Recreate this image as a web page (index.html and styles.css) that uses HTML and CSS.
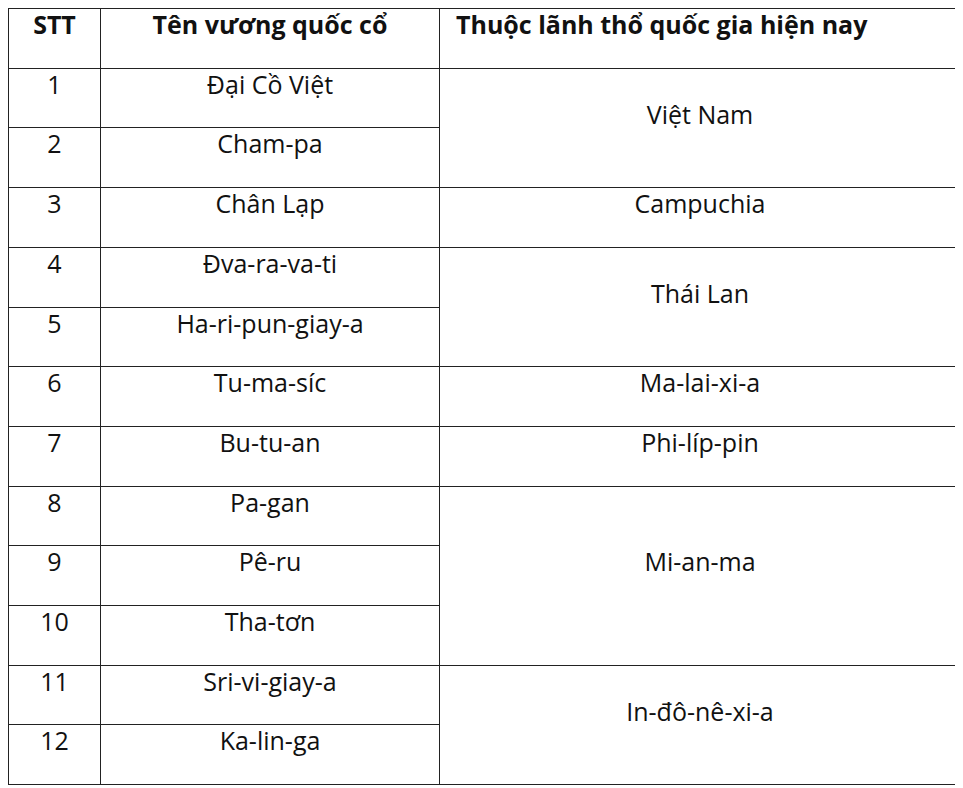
FILE: index.html
```html
<!DOCTYPE html>
<html lang="vi">
<head>
<meta charset="utf-8">
<title>Vương quốc cổ</title>
<link rel="stylesheet" href="styles.css">
</head>
<body>
<table class="grid">
  <colgroup>
    <col class="c1">
    <col class="c2">
    <col class="c3">
  </colgroup>
  <thead>
    <tr>
      <th class="center">STT</th>
      <th class="center">Tên vương quốc cổ</th>
      <th class="left">Thuộc lãnh thổ quốc gia hiện nay</th>
    </tr>
  </thead>
  <tbody>
    <tr><td>1</td><td>Đại Cồ Việt</td><td rowspan="2">Việt Nam</td></tr>
    <tr><td>2</td><td>Cham-pa</td></tr>
    <tr><td>3</td><td>Chân Lạp</td><td>Campuchia</td></tr>
    <tr><td>4</td><td>Đva-ra-va-ti</td><td rowspan="2">Thái Lan</td></tr>
    <tr><td>5</td><td>Ha-ri-pun-giay-a</td></tr>
    <tr><td>6</td><td>Tu-ma-síc</td><td>Ma-lai-xi-a</td></tr>
    <tr><td>7</td><td>Bu-tu-an</td><td>Phi-líp-pin</td></tr>
    <tr><td>8</td><td>Pa-gan</td><td rowspan="3">Mi-an-ma</td></tr>
    <tr><td>9</td><td>Pê-ru</td></tr>
    <tr><td>10</td><td>Tha-tơn</td></tr>
    <tr><td>11</td><td>Sri-vi-giay-a</td><td rowspan="2">In-đô-nê-xi-a</td></tr>
    <tr><td>12</td><td>Ka-lin-ga</td></tr>
  </tbody>
</table>
</body>
</html>
```
FILE: styles.css
```css
html, body {
  background: #ffffff;
}
body {
  margin: 8px;
  font-family: "Open Sans", "Noto Sans", sans-serif;
  color: #111111;
}
.grid {
  border-collapse: collapse;
  width: 952px;
  table-layout: fixed;
  font-size: 25px;
}
.c1 { width: 92px; }
.c2 { width: 339px; }
.c3 { width: 521px; }
.grid th,
.grid td {
  border: 1px solid #222222;
  padding: 0 4px 27px 4px;
  vertical-align: middle;
  text-align: center;
  line-height: 31.7px;
  white-space: nowrap;
}
.grid th {
  font-weight: 700;
}
.grid th.left {
  text-align: left;
  padding-left: 16px;
}
```
